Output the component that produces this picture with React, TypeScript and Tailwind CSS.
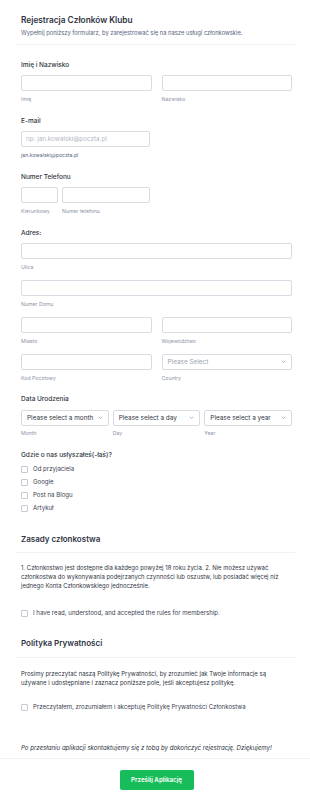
const label = "text-[6.5px] leading-[10px] font-medium text-[#2f3542]";
const sub = "mt-[3px] text-[5.2px] leading-[10px] text-[#8d95a8]";
const field =
  "block h-[16px] w-full rounded-[2px] border border-[#d8dbe2] bg-white px-[4px] text-[6.3px] outline-none placeholder:text-[#b3b9c6]";

function Chevron() {
  return (
    <svg width="5" height="4" viewBox="0 0 10 8" className="shrink-0">
      <polyline points="2,2 5,5 8,2" fill="none" stroke="#8d95a8" strokeWidth="1.4" strokeLinecap="round" strokeLinejoin="round" />
    </svg>
  );
}

function FakeSelect({ text, muted }: { text: string; muted?: boolean }) {
  return (
    <div className="flex h-[16px] w-full items-center justify-between rounded-[2px] border border-[#d8dbe2] bg-white pl-[5px] pr-[5px]">
      <span className={`whitespace-nowrap text-[6.4px] leading-none ${muted ? "text-[#9aa0b0]" : "text-[#2f3542]"}`}>{text}</span>
      <Chevron />
    </div>
  );
}

function Check({ text }: { text: string }) {
  return (
    <label className="flex h-[13px] items-center gap-[5px]">
      <span className="h-[7px] w-[7px] shrink-0 rounded-[1px] border border-[#c6cad4] bg-white" />
      <span className="text-[6.1px] leading-none text-[#3a4150]">{text}</span>
    </label>
  );
}

function Field({ sublabel, className = "" }: { sublabel: string; className?: string }) {
  return (
    <div className={className}>
      <input className={field} />
      <div className={sub}>{sublabel}</div>
    </div>
  );
}

export default function App() {
  return (
    <div className="min-h-[807px] bg-white font-['Inter',sans-serif] text-[#2f3542]">
      <div className="px-[15px]">
        {/* header */}
        <div className="pl-[6px] pr-[3px] pt-[15px] pb-[7px]">
          <h1 className="text-[8.3px] leading-[10px] font-semibold">Rejestracja Członków Klubu</h1>
          <p className="mt-[4px] text-[5.8px] leading-[8px] text-[#57647e]">
            Wypełnij poniższy formularz, by zarejestrować się na nasze usługi członkowskie.
          </p>
        </div>
        <div className="h-px bg-[#f0f1f4]" />

        <div className="pl-[6px] pr-[3px] pt-[15px]">
          {/* name */}
          <div className={label}>Imię i Nazwisko</div>
          <div className="mt-[5px] grid grid-cols-2 gap-[10px]">
            <Field sublabel="Imię" />
            <Field sublabel="Nazwisko" />
          </div>

          {/* email */}
          <div className={`mt-[12px] ${label}`}>E-mail</div>
          <div className="mt-[5px] w-[129px]">
            <input className={field} placeholder="np: jan.kowalski@poczta.pl" />
            <div className="mt-[3px] text-[5.2px] leading-[10px] text-[#57647e]">jan.kowalski@poczta.pl</div>
          </div>

          {/* phone */}
          <div className={`mt-[12px] ${label}`}>Numer Telefonu</div>
          <div className="mt-[5px] flex gap-[4px]">
            <Field sublabel="Kierunkowy" className="w-[37px]" />
            <Field sublabel="Numer telefonu" className="w-[88px]" />
          </div>

          {/* address */}
          <div className={`mt-[12px] ${label}`}>Adres:</div>
          <Field sublabel="Ulica" className="mt-[5px]" />
          <Field sublabel="Numer Domu" className="mt-[8px]" />
          <div className="mt-[8px] grid grid-cols-2 gap-[10px]">
            <Field sublabel="Miasto" />
            <Field sublabel="Województwo" />
          </div>
          <div className="mt-[8px] grid grid-cols-2 gap-[10px]">
            <Field sublabel="Kod Pocztowy" />
            <div>
              <FakeSelect text="Please Select" muted />
              <div className={sub}>Country</div>
            </div>
          </div>

          {/* birth date */}
          <div className={`mt-[11px] ${label}`}>Data Urodzenia</div>
          <div className="mt-[6px] grid grid-cols-3 gap-[4px]">
            <div>
              <FakeSelect text="Please select a month" />
              <div className="mt-[2px] text-[5.2px] leading-[10px] text-[#8d95a8]">Month</div>
            </div>
            <div>
              <FakeSelect text="Please select a day" />
              <div className="mt-[2px] text-[5.2px] leading-[10px] text-[#8d95a8]">Day</div>
            </div>
            <div>
              <FakeSelect text="Please select a year" />
              <div className="mt-[2px] text-[5.2px] leading-[10px] text-[#8d95a8]">Year</div>
            </div>
          </div>

          {/* source */}
          <div className={`mt-[12px] ${label}`}>Gdzie o nas usłyszałeś(-łaś)?</div>
          <div className="mt-[2.5px] flex flex-col">
            <Check text="Od przyjaciela" />
            <Check text="Google" />
            <Check text="Post na Blogu" />
            <Check text="Artykuł" />
          </div>
        </div>

        {/* membership rules */}
        <div className="mt-[19px] pl-[6px] pr-[3px] pb-[8px]">
          <h2 className="text-[8px] leading-[10px] font-semibold">Zasady członkostwa</h2>
        </div>
        <div className="h-px bg-[#f0f1f4]" />
        <div className="pl-[6px] pr-[3px] pt-[10px]">
          <p className="text-[5.95px] leading-[9px] text-[#2f3542]">
            {" "}1. Członkostwo jest dostępne dla każdego powyżej 18 roku życia. 2. Nie możesz używać członkostwa do
            wykonywania podejrzanych czynności lub oszustw, lub posiadać więcej niż jednego Konta Członkowskiego
            jednocześnie.
          </p>
          <div className="mt-[17px]">
            <Check text="I have read, understood, and accepted the rules for membership." />
          </div>
        </div>

        {/* privacy */}
        <div className="mt-[18.5px] pl-[6px] pr-[3px] pb-[9px]">
          <h2 className="text-[8px] leading-[10px] font-semibold">Polityka Prywatności</h2>
        </div>
        <div className="h-px bg-[#f0f1f4]" />
        <div className="pl-[6px] pr-[3px] pt-[11px]">
          <p className="max-w-[258px] text-[6px] leading-[9px] text-[#2f3542]">
            Prosimy przeczytać naszą Politykę Prywatności, by zrozumieć jak Twoje informacje są używane i udostępniane i
            zaznacz poniższe pole, jeśli akceptujesz politykę.
          </p>
          <div className="mt-[14px]">
            <Check text="Przeczytałem, zrozumiałem i akceptuję Politykę Prywatności Członkostwa" />
          </div>
          <p className="mt-[28.5px] text-[6.1px] leading-[9px] italic text-[#2f3542]">
            Po przesłaniu aplikacji skontaktujemy się z tobą by dokończyć rejestrację. Dziękujemy!
          </p>
        </div>
      </div>

      <div className="mt-[6.5px] h-px bg-[#f0f1f4]" />
      <div className="flex justify-center pl-[21px] pr-[18px] pt-[11px]">
        <button className="h-[20px] w-[74px] rounded-[2px] bg-[#18bd5b] text-[6.2px] font-semibold text-white">
          Prześlij Aplikację
        </button>
      </div>
    </div>
  );
}
